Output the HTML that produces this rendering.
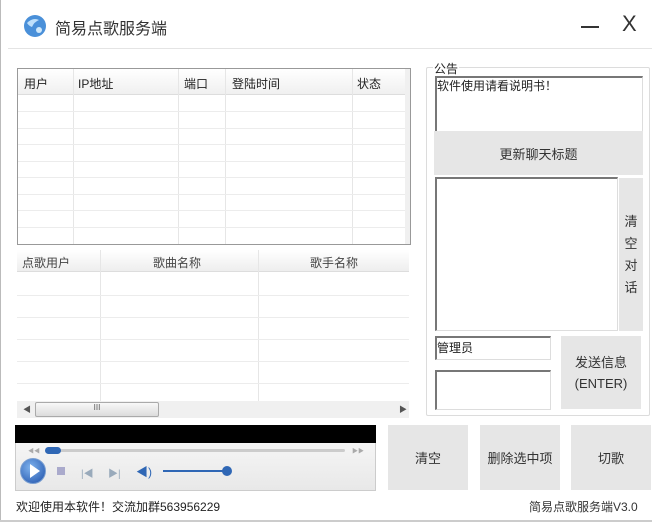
<!DOCTYPE html>
<html><head><meta charset="utf-8"><style>
*{margin:0;padding:0;box-sizing:border-box}
body{width:652px;height:522px;background:#fff;position:relative;overflow:hidden;font-family:"Liberation Sans","Noto Sans CJK SC",sans-serif;font-size:12px;color:#222}
.a{position:absolute}
.btn{position:absolute;background:#e6e6e6;display:flex;align-items:center;justify-content:center;font-size:13px;color:#333;text-align:center}
.inp{position:absolute;background:#fff;border-top:2px solid #777;border-left:2px solid #777;border-right:1px solid #ddd;border-bottom:1px solid #ddd}
.hl{position:absolute;height:1px;background:#ececec}
.vl{position:absolute;width:1px;background:#e6e6e6}
</style></head><body>
<div class="a" style="left:0;top:0;width:1px;height:522px;background:#bbb"></div>
<svg class="a" style="left:23px;top:14px" width="24" height="24" viewBox="0 0 24 24"><circle cx="12" cy="12" r="11" fill="#4a90d9"/><path d="M4 9 Q10 3 16 6 Q11 8 9 13 Q6 12 4 9Z" fill="#bfe0fb"/><circle cx="16" cy="16" r="3" fill="#cfe8fb"/></svg>
<div class="a" style="left:55px;top:15px;font-size:16px;color:#333">简易点歌服务端</div>
<div class="a" style="left:581px;top:26px;width:18px;height:2px;background:#333"></div>
<div class="a" style="left:622px;top:11px;font-size:22px;color:#333;font-family:'Liberation Sans',sans-serif">X</div>
<div class="a" style="left:8px;top:48px;width:644px;height:1px;background:#e4e4e4"></div>

<!-- table1 -->
<div class="a" style="left:17px;top:68px;width:394px;height:177px;border:1px solid #999;background:#fff"></div>
<div class="a" style="left:18px;top:69px;width:387px;height:26px;background:linear-gradient(#fff,#f0f0f0);border-bottom:1px solid #ddd"></div>
<div class="a" style="left:405px;top:69px;width:5px;height:175px;background:#f0f0f0"></div>
<div class="a" style="left:24px;top:75px">用户</div>
<div class="a" style="left:78px;top:75px">IP地址</div>
<div class="a" style="left:184px;top:75px">端口</div>
<div class="a" style="left:232px;top:75px">登陆时间</div>
<div class="a" style="left:357px;top:75px">状态</div>
<div class="vl" style="left:73px;top:69px;height:175px"></div>
<div class="vl" style="left:178px;top:69px;height:175px"></div>
<div class="vl" style="left:225px;top:69px;height:175px"></div>
<div class="vl" style="left:352px;top:69px;height:175px"></div>
<div class="hl" style="left:18px;top:111px;width:387px"></div>
<div class="hl" style="left:18px;top:128px;width:387px"></div>
<div class="hl" style="left:18px;top:144px;width:387px"></div>
<div class="hl" style="left:18px;top:161px;width:387px"></div>
<div class="hl" style="left:18px;top:177px;width:387px"></div>
<div class="hl" style="left:18px;top:194px;width:387px"></div>
<div class="hl" style="left:18px;top:210px;width:387px"></div>
<div class="hl" style="left:18px;top:227px;width:387px"></div>

<!-- table2 -->
<div class="a" style="left:17px;top:250px;width:392px;height:22px;background:linear-gradient(#fff,#eee);border-bottom:1px solid #ddd"></div>
<div class="a" style="left:22px;top:254px;color:#444">点歌用户</div>
<div class="a" style="left:153px;top:254px;color:#444">歌曲名称</div>
<div class="a" style="left:310px;top:254px;color:#444">歌手名称</div>
<div class="vl" style="left:100px;top:250px;height:151px"></div>
<div class="vl" style="left:258px;top:250px;height:151px"></div>
<div class="hl" style="left:17px;top:295px;width:392px"></div>
<div class="hl" style="left:17px;top:317px;width:392px"></div>
<div class="hl" style="left:17px;top:339px;width:392px"></div>
<div class="hl" style="left:17px;top:361px;width:392px"></div>
<div class="hl" style="left:17px;top:383px;width:392px"></div>
<div class="a" style="left:17px;top:401px;width:392px;height:17px;background:#f0f0f0"></div>
<div class="a" style="left:23px;top:404px;font-size:8px;color:#555">◀</div>
<div class="a" style="left:399px;top:404px;font-size:8px;color:#555">▶</div>
<div class="a" style="left:35px;top:402px;width:124px;height:15px;background:linear-gradient(#f8f8f8,#dcdcdc);border:1px solid #aaa;border-radius:2px;font-size:8px;text-align:center;color:#555">III</div>

<!-- player -->
<div class="a" style="left:15px;top:425px;width:361px;height:66px;border:1px solid #ccc;background:linear-gradient(#fafafa,#e8e8e8)"></div>
<div class="a" style="left:15px;top:425px;width:361px;height:18px;background:#000"></div>
<div class="a" style="left:48px;top:449px;width:297px;height:3px;background:#ccc;border-radius:2px"></div>
<div class="a" style="left:45px;top:447px;width:16px;height:7px;background:#2f67b5;border-radius:4px"></div>
<div class="a" style="left:28px;top:446px;font-size:6px;color:#aaa">◀◀</div>
<div class="a" style="left:352px;top:446px;font-size:6px;color:#aaa">▶▶</div>
<div class="a" style="left:20px;top:458px;width:26px;height:26px;border-radius:50%;background:radial-gradient(circle at 40% 35%,#7fb3ee,#1d4fa8);border:1px solid #7a9fd1"></div>
<div class="a" style="left:30px;top:464px;width:0;height:0;border-left:10px solid #fff;border-top:7px solid transparent;border-bottom:7px solid transparent"></div>
<div class="a" style="left:57px;top:467px;width:8px;height:8px;background:#aac"></div>
<div class="a" style="left:81px;top:465px;font-size:10px;color:#9ab">|◀</div>
<div class="a" style="left:108px;top:465px;font-size:10px;color:#9ab">▶|</div>
<div class="a" style="left:136px;top:463px;font-size:12px;color:#2f67b5">◀)</div>
<div class="a" style="left:163px;top:470px;width:68px;height:2px;background:#2f67b5"></div>
<div class="a" style="left:222px;top:466px;width:10px;height:10px;border-radius:50%;background:#2f67b5"></div>

<div class="btn" style="left:388px;top:425px;width:80px;height:65px">清空</div>
<div class="btn" style="left:480px;top:425px;width:80px;height:65px">删除选中项</div>
<div class="btn" style="left:571px;top:425px;width:80px;height:65px">切歌</div>

<div class="a" style="left:16px;top:498px;font-size:12px">欢迎使用本软件！交流加群563956229</div>
<div class="a" style="left:529px;top:498px;font-size:12px;color:#333">简易点歌服务端V3.0</div>
<div class="a" style="left:0;top:520px;width:652px;height:2px;background:#ccc"></div>

<!-- right panel -->
<div class="a" style="left:426px;top:67px;width:224px;height:349px;border:1px solid #dcdcdc;border-radius:2px"></div>
<div class="a" style="left:433px;top:60px;background:#fff;padding:0 1px;font-size:12px">公告</div>
<div class="inp" style="left:435px;top:76px;width:208px;height:56px"></div>
<div class="a" style="left:437px;top:77px;font-size:12px">软件使用请看说明书！</div>
<div class="btn" style="left:434px;top:131px;width:209px;height:44px">更新聊天标题</div>
<div class="inp" style="left:435px;top:177px;width:183px;height:154px"></div>
<div class="btn" style="left:619px;top:178px;width:24px;height:153px;line-height:22px">清<br>空<br>对<br>话</div>
<div class="inp" style="left:435px;top:336px;width:116px;height:24px"></div>
<div class="a" style="left:437px;top:339px;font-size:12px">管理员</div>
<div class="inp" style="left:435px;top:370px;width:116px;height:40px"></div>
<div class="btn" style="left:561px;top:336px;width:80px;height:73px;line-height:21px">发送信息<br>(ENTER)</div>
</body></html>
